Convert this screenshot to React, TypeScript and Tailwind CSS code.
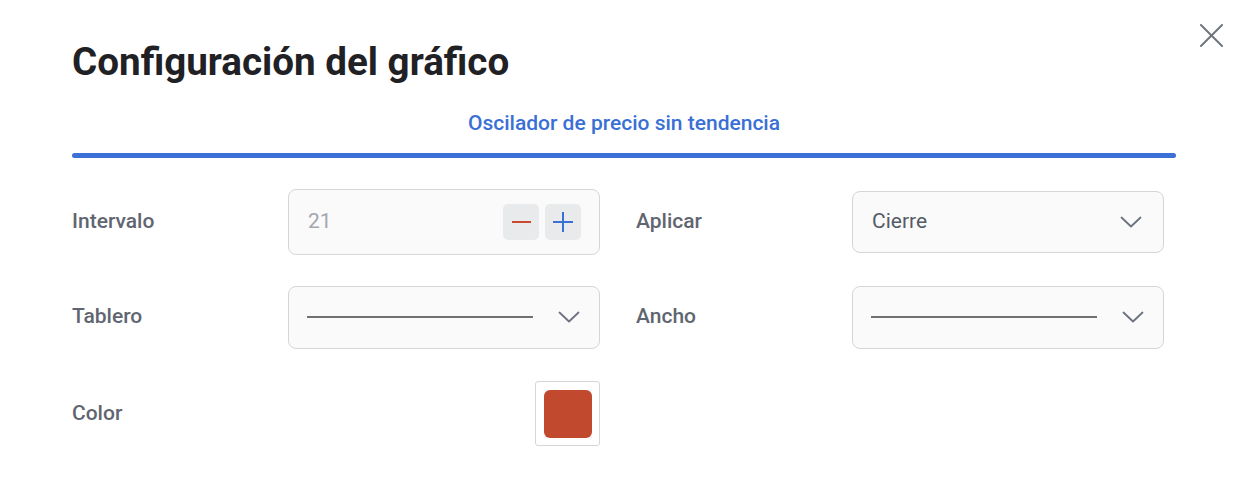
import React from "react";

function Chevron() {
  return (
    <svg width="22" height="12" viewBox="0 0 22 12" fill="none" className="text-[#6b7280]">
      <path d="M1.5 1.5 L11 10.5 L20.5 1.5" stroke="currentColor" strokeWidth="1.8" strokeLinecap="round" strokeLinejoin="round" />
    </svg>
  );
}

function Label({ children }: { children: React.ReactNode }) {
  return <div className="w-[216px] text-[21px] font-medium text-[#5f6671]">{children}</div>;
}

export default function App() {
  return (
    <div className="relative h-[498px] w-[1250px] bg-white" style={{ fontFamily: "Roboto, 'Noto Sans', sans-serif" }}>
      <button className="absolute right-[27px] top-[24px] text-[#6f747c]">
        <svg width="23" height="23" viewBox="0 0 24 24" fill="none">
          <path d="M1 1 L23 23 M23 1 L1 23" stroke="currentColor" strokeWidth="2" strokeLinecap="round" />
        </svg>
      </button>
      <div className="pl-[72px] pr-[74px] pt-[38px]">
        <h1 className="text-[38.6px] font-bold leading-[48px] text-[#1f2125]">Configuración del gráfico</h1>
        <div className="mt-[23px] flex flex-col">
          <div className="text-center text-[21px] font-medium leading-[28px] text-[#3a6fd6]">
            Oscilador de precio sin tendencia
          </div>
          <div className="mt-[16px] h-[5px] rounded-full bg-[#3b70d6]" />
        </div>
        <div className="mt-[31px] flex flex-col">
          <div className="flex h-[66px] items-center">
            <Label>Intervalo</Label>
            <div className="flex h-[66px] w-[312px] items-center justify-between rounded-[8px] border border-[#d4d6da] bg-[#fafafa] pl-[19px] pr-[18px]">
              <span className="text-[21px] text-[#a3a7ae]">21</span>
              <div className="flex gap-[6px]">
                <div className="flex h-[36px] w-[36px] items-center justify-center rounded-[5px] bg-[#e9eaec]">
                  <div className="h-[2px] w-[19px] bg-[#c94a2f]" />
                </div>
                <div className="flex h-[36px] w-[36px] items-center justify-center rounded-[5px] bg-[#e9eaec]">
                  <svg width="20" height="20" viewBox="0 0 20 20">
                    <path d="M10 0 V20 M0 10 H20" stroke="#3b70d6" strokeWidth="2" />
                  </svg>
                </div>
              </div>
            </div>
            <div className="w-[36px]" />
            <Label>Aplicar</Label>
            <div className="flex h-[62px] w-[312px] items-center justify-between rounded-[8px] border border-[#d4d6da] bg-[#fafafa] pl-[19px] pr-[21px]">
              <span className="text-[21px] text-[#555b65]">Cierre</span>
              <Chevron />
            </div>
          </div>
          <div className="mt-[30px] flex h-[64px] items-center">
            <Label>Tablero</Label>
            <div className="flex h-[63px] w-[312px] items-center justify-between rounded-[8px] border border-[#d4d6da] bg-[#fafafa] pl-[18px] pr-[19px]">
              <div className="h-[2px] w-[226px] bg-[#707070]" />
              <Chevron />
            </div>
            <div className="w-[36px]" />
            <Label>Ancho</Label>
            <div className="flex h-[63px] w-[312px] items-center justify-between rounded-[8px] border border-[#d4d6da] bg-[#fafafa] pl-[18px] pr-[19px]">
              <div className="h-[2px] w-[226px] bg-[#707070]" />
              <Chevron />
            </div>
          </div>
          <div className="mt-[32px] flex h-[65px] items-center">
            <div className="w-[463px] text-[21px] font-medium text-[#5f6671]">Color</div>
            <div className="flex h-[65px] w-[65px] items-center justify-center rounded-[3px] border border-[#d4d6da] bg-white">
              <div className="h-[48px] w-[48px] rounded-[6px] bg-[#c0492e]" />
            </div>
          </div>
        </div>
      </div>
    </div>
  );
}
